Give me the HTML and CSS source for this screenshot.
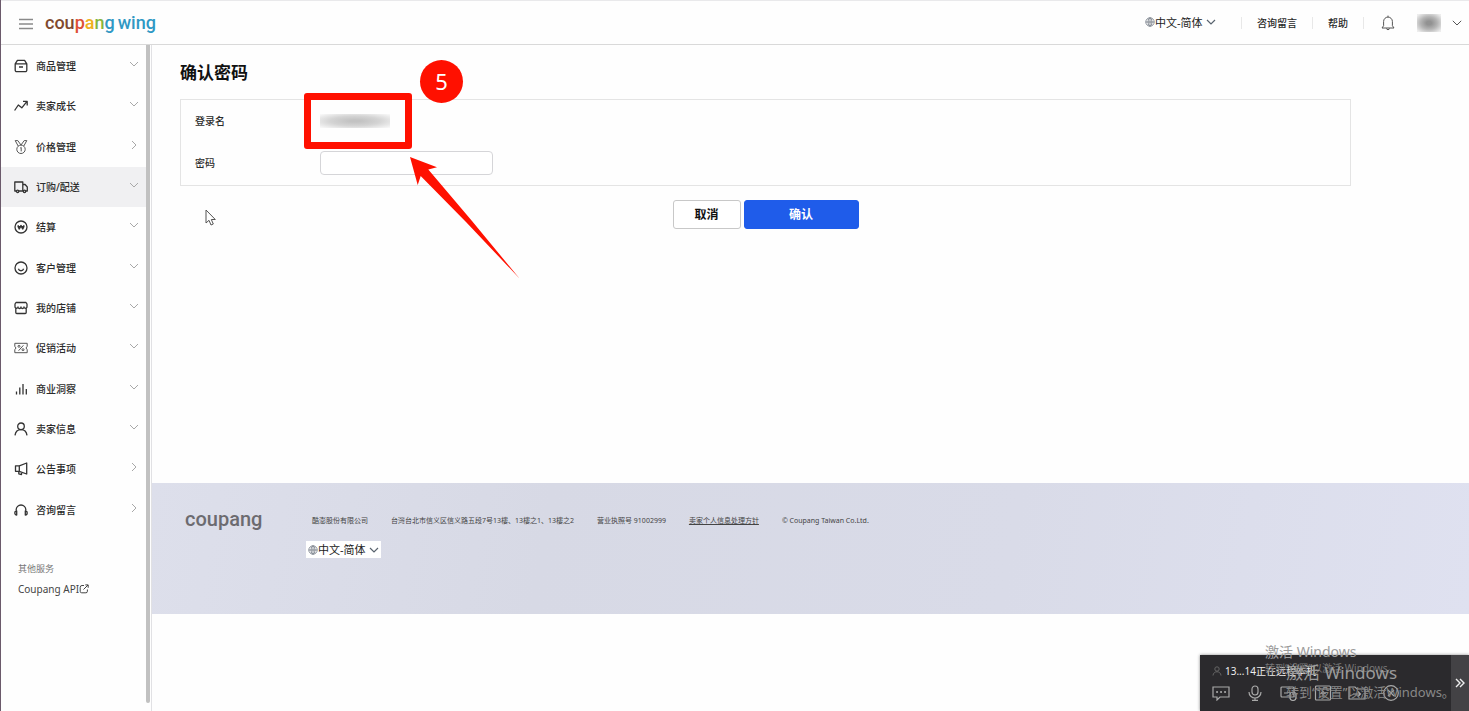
FILE: index.html
```html
<!DOCTYPE html>
<html lang="zh-CN">
<head>
<meta charset="utf-8">
<title>Coupang Wing</title>
<link rel="stylesheet" href="styles.css">
</head>
<body>
<svg class="defs" aria-hidden="true">
  <symbol id="down" viewBox="0 0 10 10"><path d="M1 3l4 4 4-4"/></symbol>
  <symbol id="right" viewBox="0 0 10 10"><path d="M3 1l4 4-4 4"/></symbol>
  <symbol id="globe" viewBox="0 0 10 10"><circle cx="5" cy="5" r="4.2"/><ellipse cx="5" cy="5" rx="2" ry="4.2"/><path d="M.8 5h8.4M5 .8v8.4"/></symbol>
</svg>

<header class="topbar">
  <button class="menu" aria-label="菜单"><svg viewBox="0 0 14 12"><path d="M0 1.5h14M0 6h14M0 10.5h14"/></svg></button>
  <a class="logo" href="#"><span class="c1">cou</span><span class="c2">p</span><span class="c3">a</span><span class="c4">n</span><span class="c5">g</span><span class="wing">wing</span></a>
  <div class="tools">
    <div class="lang">
      <svg class="globe"><use href="#globe"/></svg>
      <select aria-label="语言"><option>中文-简体</option></select>
      <svg class="arrow"><use href="#down"/></svg>
    </div>
    <a class="tool ask" href="#">咨询留言</a>
    <a class="tool help" href="#">帮助</a>
    <button class="tool bell" aria-label="通知"><svg viewBox="0 0 14 16"><path d="M1 13h12l-1.6-2.3V6.500a4.400 4.400 0 0 0-8.800 0v4.200zM7 2V.6M5.600 13.300a1.400 1.400 0 0 0 2.800 0"/></svg></button>
    <span class="user"></span>
    <button class="usermenu" aria-label="账户"><svg viewBox="0 0 10 10"><path d="M.8 2.800L5 7l4.200-4.200"/></svg></button>
  </div>
</header>

<div class="layout">
  <aside class="sidebar">
    <nav class="nav">
      <ul class="items">
        <li><a href="#"><svg class="ico" viewBox="0 0 14 14"><path d="M1.200 4.800L3.400 1.400h7.200l2.200 3.400v6.400a1.500 1.500 0 0 1-1.500 1.500H2.700a1.500 1.500 0 0 1-1.500-1.500zM1.200 4.800h11.600M5 8h4"/></svg><span>商品管理</span><svg class="chev"><use href="#down"/></svg></a></li>
        <li><a href="#"><svg class="ico" viewBox="0 0 14 14"><path d="M.6 11.500L4.300 6l3.500 2.800 5-6.200M9 2.400h4.200v4"/></svg><span>卖家成长</span><svg class="chev"><use href="#down"/></svg></a></li>
        <li><a href="#"><svg class="ico thin" viewBox="0 0 14 14"><circle cx="7" cy="9.300" r="4.200"/><path d="M1.200.6L4.200 6M12.800.6L9.800 6M1.200.6h2.600L7 5 10.200.6h2.600M6.300 8l.9-.6v4"/></svg><span>价格管理</span><svg class="chev"><use href="#right"/></svg></a></li>
        <li class="active"><a href="#"><svg class="ico" viewBox="0 0 14 14"><path d="M2.300 11H.8V2h8v9H5M8.800 4.500h2.300L13.300 7v4h-1.500M8.800 11h.4"/><circle cx="3.600" cy="11.300" r="1.200"/><circle cx="10.500" cy="11.300" r="1.200"/></svg><span>订购/配送</span><svg class="chev"><use href="#down"/></svg></a></li>
        <li><a href="#"><svg class="ico" viewBox="0 0 14 14"><circle cx="7" cy="7" r="6"/><path class="fat" d="M3.900 5.400L5.200 8.800 7 5.600l1.800 3.200 1.300-3.400M3.600 6.700h6.800"/></svg><span>结算</span><svg class="chev"><use href="#down"/></svg></a></li>
        <li><a href="#"><svg class="ico" viewBox="0 0 14 14"><circle cx="7" cy="7" r="6"/><path d="M4.400 7.800a2.700 2.700 0 0 0 5.200 0"/></svg><span>客户管理</span><svg class="chev"><use href="#down"/></svg></a></li>
        <li><a href="#"><svg class="ico" viewBox="0 0 14 14"><path d="M1.800 7v4.500a1 1 0 0 0 1 1h8.400a1 1 0 0 0 1-1V7M2 1.500h10l1 1.500v2.500a1.500 1.500 0 0 1-3 .5 1.500 1.500 0 0 1-3 0 1.500 1.500 0 0 1-3 0 1.500 1.500 0 0 1-3-.5V3z"/></svg><span>我的店铺</span><svg class="chev"><use href="#down"/></svg></a></li>
        <li><a href="#"><svg class="ico thin" viewBox="0 0 14 14"><path d="M.8 2.300h12.400v3L12 7l1.200 1.700v3H.8v-3L2 7 .8 5.300zM4.600 9.700l4.800-5.400"/><circle cx="5" cy="5.300" r="1"/><circle cx="9" cy="8.700" r="1"/></svg><span>促销活动</span><svg class="chev"><use href="#down"/></svg></a></li>
        <li><a href="#"><svg class="ico" viewBox="0 0 14 14"><path d="M2.500 12.500V9.500M5.800 12.500V5.500M9 12.500V2M12.300 12.500V7"/></svg><span>商业洞察</span><svg class="chev"><use href="#down"/></svg></a></li>
        <li><a href="#"><svg class="ico" viewBox="0 0 14 14"><circle cx="7" cy="4.300" r="3.300"/><path d="M1 13.300C1.500 9.600 3.700 7.600 7 7.600s5.500 2 6 5.700"/></svg><span>卖家信息</span><svg class="chev"><use href="#down"/></svg></a></li>
        <li><a href="#"><svg class="ico" viewBox="0 0 14 14"><path d="M5.300 3.800L12.700 1v11L5.300 9.300H1.500V3.800zM5.300 3.800v5.500M4.800 9.500v2.300l2.700.8v-2.300"/></svg><span>公告事项</span><svg class="chev"><use href="#right"/></svg></a></li>
        <li><a href="#"><svg class="ico" viewBox="0 0 14 14"><path d="M2.200 8.500V6.800a4.800 4.800 0 0 1 9.600 0v1.700M2.700 8v4C.2 12 .2 8 2.700 8zM11.300 8v4c2.500 0 2.500-4 0-4z"/></svg><span>咨询留言</span><svg class="chev"><use href="#right"/></svg></a></li>
      </ul>
      <div class="other">
        <p>其他服务</p>
        <a href="#">Coupang API<svg viewBox="0 0 10 10"><path d="M5 1.500H3A1.800 1.800 0 0 0 1.200 3.300v4A1.500 1.500 0 0 0 2.700 8.800h4.200a1.500 1.500 0 0 0 1.500-1.500V5.500M4.500 5.500l4.500-4.500M6.300.9h2.900v2.900"/></svg></a>
      </div>
    </nav>
    <div class="scroll"></div>
  </aside>

  <div class="page">
    <main class="main">
      <h1>确认密码</h1>
      <form>
        <div class="panel">
          <div class="row"><span class="label">登录名</span><span class="masked"></span></div>
          <div class="row"><label class="label" for="pw">密码</label><input id="pw" type="password"></div>
        </div>
        <div class="actions">
          <button type="button" class="btn">取消</button>
          <button type="button" class="btn primary">确认</button>
        </div>
      </form>
    </main>
    <footer class="footer">
      <div class="mark">coupang</div>
      <div>
        <div class="legal">
          <span>酷澎股份有限公司</span>
          <span>台灣台北市信义区信义路五段7号13樓、13樓之1、13樓之2</span>
          <span>营业执照号 91002999</span>
          <a href="#">卖家个人信息处理方针</a>
          <span>© Coupang Taiwan Co.Ltd.</span>
        </div>
        <div class="lang boxed">
          <svg class="globe"><use href="#globe"/></svg>
          <select aria-label="页脚语言"><option>中文-简体</option></select>
          <svg class="arrow"><use href="#down"/></svg>
        </div>
      </div>
    </footer>
  </div>
</div>

<div class="frame"></div>
<div class="step">5</div>
<svg class="pointer" viewBox="0 0 112 124"><path d="M1 1L28 11.300 19.300 13.500 63 65 110.500 122.500 57 66 11.700 20 8.700 29z"/></svg>
<svg class="cursor" viewBox="0 0 12 18"><path d="M1 1v13l3-2.700 2 4.700 2.300-1-2-4.500h4z"/></svg>

<div class="remote">
  <div class="remotebody">
    <div class="status"><svg viewBox="0 0 10 10"><circle cx="5" cy="3" r="2.200"/><path d="M1 9.500c.3-5 7.700-5 8 0"/></svg><span>13...14正在远程本机</span></div>
    <div class="controls">
      <button aria-label="聊天"><svg viewBox="0 0 18 16"><path d="M1 2h16v10H8l-3 3v-3H1z"/><path class="dots" d="M5 7h.1M9 7h.1M13 7h.1"/></svg></button>
      <button aria-label="语音"><svg viewBox="0 0 18 16"><rect x="6" y="1" width="6" height="9" rx="3"/><path d="M3 7a6 6 0 0 0 12 0M9 13v2M6 15.300h6"/></svg></button>
      <button aria-label="控制"><svg viewBox="0 0 18 16"><rect x="1" y="2" width="13" height="10" rx="1"/><path d="M4 5h.1M7 5h.1M4 8h4"/><rect x="10" y="7" width="6" height="8.500" rx="3"/><path d="M13 7v3"/></svg></button>
      <button aria-label="屏幕"><svg viewBox="0 0 18 16"><rect x="1.500" y="1" width="15" height="14" rx="1"/><path d="M1.500 4h15M9 12V7M6.500 9L9 6.500 11.500 9"/></svg></button>
      <button aria-label="文件"><svg viewBox="0 0 18 16"><path d="M1 14V2h6l2 2h8v10zM5 9h7M10 6.500L12.500 9 10 11.500"/></svg></button>
      <button aria-label="结束"><svg viewBox="0 0 18 16"><circle cx="9" cy="8" r="7.300"/><path d="M6 5l6 6M12 5l-6 6"/></svg></button>
    </div>
  </div>
  <button class="collapse" aria-label="收起"><svg viewBox="0 0 10 10"><path d="M1 1l4 4-4 4M5 1l4 4-4 4"/></svg></button>
</div>
<div class="watermark back"><b>激活 Windows</b><span>转到“设置”以激活 Windows。</span></div>
<div class="watermark front"><b>激活 Windows</b><span>转到“设置”以激活Windows。</span></div>
</body>
</html>
```

FILE: styles.css
```css
* { box-sizing: border-box; }
body {
  margin: 0;
  min-height: 100vh;
  display: flex;
  flex-direction: column;
  position: relative;
  overflow: hidden;
  border-left: 1px solid #6b5a6b;
  background: #fefefe;
  color: #2b2b2b;
  font: 10px/14px "Noto Sans", "Noto Sans CJK SC", sans-serif;
}
a { color: inherit; text-decoration: none; }
button { border: 0; padding: 0; background: none; font: inherit; color: inherit; }
svg { display: block; fill: none; stroke: currentColor; flex: none; }
.defs { position: absolute; width: 0; height: 0; }

.topbar {
  height: 45px;
  display: flex;
  align-items: center;
  padding-left: 18px;
  border-top: 1px solid #e9e9eb;
  border-bottom: 1px solid #d9d9d9;
}
.menu { color: #8a8a8a; margin-top: 3px; }
.menu svg { width: 14px; height: 12px; stroke-width: 1.4; }
.logo { margin-left: 12px; font: 500 18px/24px Roboto, sans-serif; }
.c1 { color: #80492f; }
.c2 { color: #dd5136; }
.c3 { color: #f0b01f; }
.c4 { color: #86b53c; }
.c5, .wing { color: #2f98c4; }
.wing { margin-left: 3px; }
.tools { margin-left: auto; display: flex; align-items: center; padding-right: 7px; }
.lang { display: flex; align-items: center; font-size: 11px; line-height: 17px; }
.lang .globe { width: 10px; height: 10px; color: #6e7681; stroke-width: .8; }
.lang .arrow { width: 10px; height: 10px; margin-left: 3px; color: #59636e; stroke-width: 1.2; }
select {
  appearance: none;
  border: 0;
  padding: 0;
  background: none;
  color: #222;
  font: inherit;
}
.tool { border-left: 1px solid #e8e8e8; height: 12px; line-height: 12px; font-weight: 500; }
.tools .lang { margin-right: 25px; padding-bottom: 1px; }
.ask, .help { padding: 0 15px; }
.bell { display: flex; align-items: center; padding: 0 22px 0 17px; color: #555; }
.bell svg { width: 14px; height: 16px; }
.user { width: 24px; height: 18px; background: radial-gradient(ellipse, #929292 15%, #b5b5b5 50%, #ededed 90%); }
.usermenu { margin-left: 11px; color: #555; }
.usermenu svg { width: 10px; height: 10px; }

.layout { flex: 1; display: flex; }
.sidebar { width: 151px; flex: none; display: flex; border-right: 1px solid #e1e1e4; }
.nav { flex: 1; }
.items {
  list-style: none;
  margin: 1px 0 0;
  padding: 0;
  height: 484px;
  display: grid;
  grid-template-rows: repeat(12, 1fr);
}
.items li { display: grid; }
.active { background: #f0f0f2; }
.items a { display: flex; align-items: center; padding: 0 7px 0 13px; }
.items span { flex: 1; margin-left: 8px; font-weight: 500; }
.ico { width: 14px; height: 14px; stroke-width: 1.3; stroke-linejoin: round; color: #333; }
.thin { stroke-width: 1; color: #555; }
.fat { stroke-width: 1.6; }
.chev { width: 10px; height: 10px; margin-bottom: 4px; color: #a8a8a8; }
.scroll { width: 4px; margin: 0 1px 8px 0; background: #c1c1c1; border-radius: 0 0 2px 2px; }
.other { padding: 32px 0 0 17px; }
.other p { margin: 0 0 6px; font-size: 9px; color: #777; }
.other a { display: flex; align-items: center; color: #444; }
.other svg { width: 10px; height: 10px; }

.page { flex: 1; min-width: 0; }
.main { min-height: 438px; padding: 16px 118px 0 28px; }
h1 { margin: 0 0 14px; font-size: 17px; line-height: 24px; color: #111; }
.panel { border: 1px solid #e4e4e4; padding: 0 14px 1px; }
.row { display: flex; align-items: center; height: 42px; }
.row .label { width: 125px; font-weight: 500; }
.masked {
  width: 70px;
  height: 14px;
  background: radial-gradient(ellipse, #c2c2c2 10%, #d4d4d4 50%, #f7f7f7 95%);
}
.row input {
  width: 173px;
  height: 24px;
  padding: 0 8px;
  border: 1px solid #d5d5d8;
  border-radius: 4px;
  background: #fff;
}
.actions { display: flex; justify-content: center; gap: 3px; margin-top: 14px; }
.btn {
  width: 68px;
  height: 29px;
  border: 1px solid #c8c8c8;
  border-radius: 3px;
  background: #fff;
  color: #111;
  font-size: 12px;
  font-weight: 700;
}
.primary { width: 115px; border-color: #1f5cea; background: #1f5cea; color: #fff; }

.footer {
  display: flex;
  height: 131px;
  padding: 24px 33px;
  background: linear-gradient(100deg, #dddfeb, #d7d9e5 30%, #d9dbe8 65%, #dfe1f0);
}
.mark { width: 127px; font: 500 20px/24px Roboto, sans-serif; color: #6c6b70; }
.legal { display: flex; gap: 23px; padding-top: 7px; font-size: 7px; line-height: 14px; white-space: nowrap; color: #444; }
.legal a { text-decoration: underline; }
.boxed { width: 75px; margin: 13px 0 0 -6px; padding-left: 2px; background: #fff; }

/* Tutorial marks drawn above the page */
.frame { position: absolute; left: 303px; top: 93px; width: 108px; height: 56px; border: 7px solid #ff1000; border-radius: 3px; }
.step {
  position: absolute;
  left: 419px;
  top: 60px;
  width: 43px;
  height: 43px;
  border-radius: 50%;
  background: #ff1000;
  color: #fff;
  font-size: 22px;
  line-height: 43px;
  text-align: center;
}
.pointer { position: absolute; left: 408px; top: 156px; width: 112px; height: 124px; fill: #ff1000; stroke: none; }
.cursor { position: absolute; left: 204px; top: 209px; width: 12px; height: 18px; fill: #fff; stroke: #555; }

/* Remote session bar */
.remote { position: absolute; right: 0; bottom: 0; width: 269px; height: 56px; display: flex; background: #2b2a2d; color: #a9a9a9; box-shadow: 0 0 3px #888; }
.remotebody { flex: 1; padding: 9px 0 0 12px; }
.status { display: flex; align-items: center; gap: 3px; color: #eee; }
.status svg { width: 10px; height: 10px; color: #666; }
.controls { display: flex; gap: 16px; margin-top: 7px; }
.controls svg { width: 18px; height: 16px; stroke-width: 1.2; }
.dots { stroke-width: 2; stroke-linecap: round; }
.collapse { width: 18px; background: #434245; color: #eee; display: grid; place-items: center; }
.collapse svg { width: 10px; height: 10px; stroke-width: 1.4; }
.watermark { position: absolute; white-space: nowrap; pointer-events: none; color: #9b9b9b; }
.watermark b, .watermark span { display: block; font-weight: 400; }
.back { right: 75px; bottom: 36px; width: 129px; }
.back b { font-size: 14px; line-height: 18px; }
.back span { font-size: 10px; line-height: 14px; color: #777; }
.front { right: 21px; bottom: 10px; width: 162px; }
.front b { font-size: 17px; line-height: 20px; }
.front span { font-size: 13px; line-height: 18px; color: #888; }
```
